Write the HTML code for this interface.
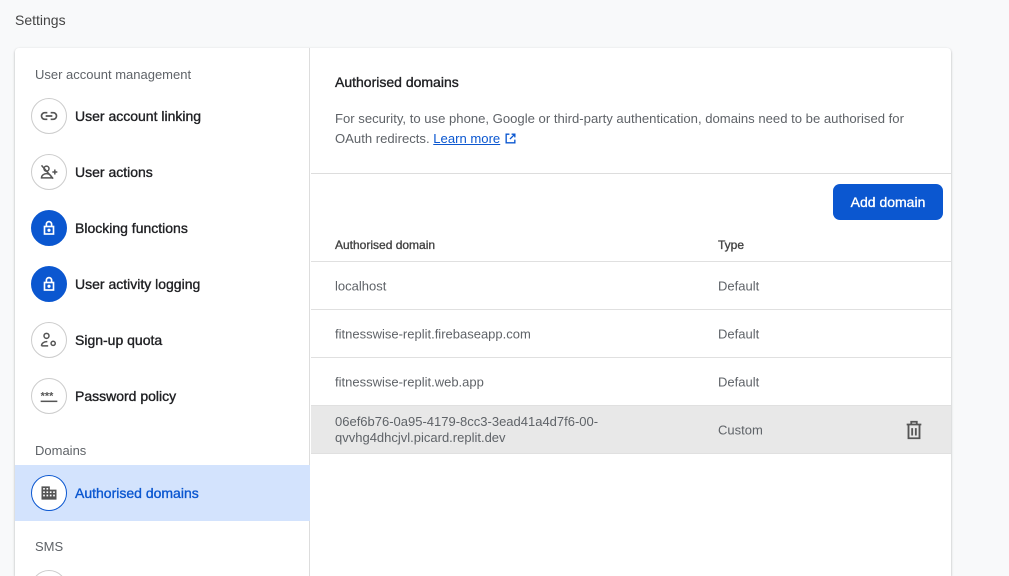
<!DOCTYPE html>
<html><head><style>
*{box-sizing:border-box;margin:0;padding:0}
html,body{width:1009px;height:576px;overflow:hidden}
body{background:#f8f9fa;font-family:"Liberation Sans",sans-serif;position:relative;color:#202124}
.title{position:absolute;left:15px;top:12px;font-size:14px;color:#444}
.card{position:absolute;left:15px;top:48px;width:936px;height:528px;overflow:hidden;background:#fff;border-radius:4px 4px 0 0;box-shadow:0 1px 2px rgba(0,0,0,.2),0 1px 3px rgba(0,0,0,.1)}
.side{position:absolute;left:0;top:0;width:295px;height:100%;border-right:1px solid #ddd}
.sec{position:absolute;left:20px;font-size:13px;color:#5f6368}
.m{font-weight:normal;-webkit-text-stroke:0.35px currentColor}
.item{position:absolute;left:0;width:295px;height:56px;display:flex;align-items:center;padding-left:16px;font-size:14px;color:#202124;-webkit-text-stroke:0.35px currentColor}
.ic{width:36px;height:36px;border-radius:50%;border:1px solid #ccc;margin-right:8px;display:flex;align-items:center;justify-content:center;background:#fff;flex:none}
.ic.b{background:#0b57d0;border-color:#0b57d0}
.sel{background:#d3e3fd;color:#0b57d0}
.sel .ic{border-color:#0b57d0}
.main{position:absolute;left:296px;top:0;right:0}
h2{position:absolute;left:24px;top:26px;font-size:14px;font-weight:normal;-webkit-text-stroke:0.35px currentColor}
.desc{position:absolute;left:24px;top:61px;width:600px;font-size:13.1px;line-height:20px;color:#5f6368}
.desc a{color:#0b57d0;text-decoration:underline}
.hr{position:absolute;left:0;right:0;border-top:1px solid #ddd}
.btn{position:absolute;left:522px;top:136px;width:110px;height:36px;background:#0b57d0;color:#fff;border-radius:7px;font-size:14px;display:flex;align-items:center;justify-content:center;-webkit-text-stroke:0.35px #fff}
.row{position:absolute;left:0;right:0;height:48px;border-bottom:1px solid #e0e0e0;font-size:13px;color:#5f6368}
.row span{position:absolute;top:50%;transform:translateY(-50%)}
.c1{left:24px}.c2{left:407px}
</style></head><body>
<div class="title">Settings</div>
<div class="card">
 <div class="side">
  <div class="sec" style="top:19px">User account management</div>
  <div class="item" style="top:40px"><div class="ic"><svg width="20" height="20" viewBox="0 0 24 24" fill="none" stroke="#555" stroke-width="2"><path d="M10 8H7a4 4 0 0 0 0 8h3M14 8h3a4 4 0 0 1 0 8h-3M8 12h8"/></svg></div>User account linking</div>
  <div class="item" style="top:96px"><div class="ic"><svg width="20" height="20" viewBox="0 0 24 24" fill="none" stroke="#555" stroke-width="1.8"><circle cx="9" cy="8" r="3"/><path d="M3 19c0-3 3-5 6-5s6 2 6 5zM3 4l14 16M19 9v6M16 12h6"/></svg></div>User actions</div>
  <div class="item" style="top:152px"><div class="ic b"><svg width="18" height="18" viewBox="0 0 24 24" fill="none" stroke="#fff" stroke-width="2.2"><rect x="6" y="10" width="12" height="10"/><path d="M8.5 10V7a3.5 3.5 0 0 1 7 0v3"/><circle cx="12" cy="15" r="1" fill="#fff"/></svg></div>Blocking functions</div>
  <div class="item" style="top:208px"><div class="ic b"><svg width="18" height="18" viewBox="0 0 24 24" fill="none" stroke="#fff" stroke-width="2.2"><rect x="6" y="10" width="12" height="10"/><path d="M8.5 10V7a3.5 3.5 0 0 1 7 0v3"/><circle cx="12" cy="15" r="1" fill="#fff"/></svg></div>User activity logging</div>
  <div class="item" style="top:264px"><div class="ic"><svg width="20" height="20" viewBox="0 0 24 24" fill="none" stroke="#555" stroke-width="1.8"><circle cx="9" cy="7" r="3"/><path d="M3 19c0-3 3-5 6-5h1M3 19h8"/><circle cx="17" cy="16" r="2.5"/></svg></div>Sign-up quota</div>
  <div class="item" style="top:320px"><div class="ic"><svg width="22" height="20" viewBox="0 0 24 24" fill="#555"><text x="2" y="16" font-size="13" font-family="Liberation Sans" font-weight="bold">***</text><rect x="2" y="17.5" width="20" height="1.8"/></svg></div>Password policy</div>
  <div class="sec" style="top:395px">Domains</div>
  <div class="item sel" style="top:417px"><div class="ic"><svg width="20" height="20" viewBox="0 0 24 24" fill="#555"><path d="M3 4h10v4h8v12H3zM5 6v2h2V6zm4 0v2h2V6zM5 10v2h2v-2zm4 0v2h2v-2zm4 0v2h2v-2zM5 14v2h2v-2zm4 0v2h2v-2zm4 0v2h2v-2zm4-4v2h2v-2zm0 4v2h2v-2z"/></svg></div>Authorised domains</div>
  <div class="sec" style="top:491px">SMS</div>
  <div class="ic" style="position:absolute;left:16px;top:522px"></div>
 </div>
 <div class="main">
  <h2>Authorised domains</h2>
  <div class="desc">For security, to use phone, Google or third-party authentication, domains need to be authorised for OAuth redirects. <a>Learn more</a> <svg width="13" height="13" viewBox="0 0 24 24" fill="none" stroke="#0b57d0" stroke-width="2.5" style="vertical-align:-2px"><path d="M10 4H4v16h16v-6M14 4h6v6M20 4L11 13"/></svg></div>
  <div class="hr" style="top:125px"></div>
  <div class="btn">Add domain</div>
  <div class="row" style="top:174px;font-size:12px;color:#444;height:40px"><span class="c1 m" style="top:23px">Authorised domain</span><span class="c2 m" style="top:23px">Type</span></div>
  <div class="row" style="top:214px"><span class="c1">localhost</span><span class="c2">Default</span></div>
  <div class="row" style="top:262px"><span class="c1">fitnesswise-replit.firebaseapp.com</span><span class="c2">Default</span></div>
  <div class="row" style="top:310px"><span class="c1">fitnesswise-replit.web.app</span><span class="c2">Default</span></div>
  <div class="row" style="top:358px;background:#e8e8e8"><span class="c1" style="line-height:16px">06ef6b76-0a95-4179-8cc3-3ead41a4d7f6-00-<br>qvvhg4dhcjvl.picard.replit.dev</span><span class="c2">Custom</span>
   <svg style="position:absolute;left:592px;top:13px" width="22" height="22" viewBox="0 0 24 24" fill="none" stroke="#555" stroke-width="2"><path d="M4 6h16M9 6V3h6v3M6 6v15h12V6M10 10v8M14 10v8"/></svg></div>
 </div>
</div>
</body></html>
